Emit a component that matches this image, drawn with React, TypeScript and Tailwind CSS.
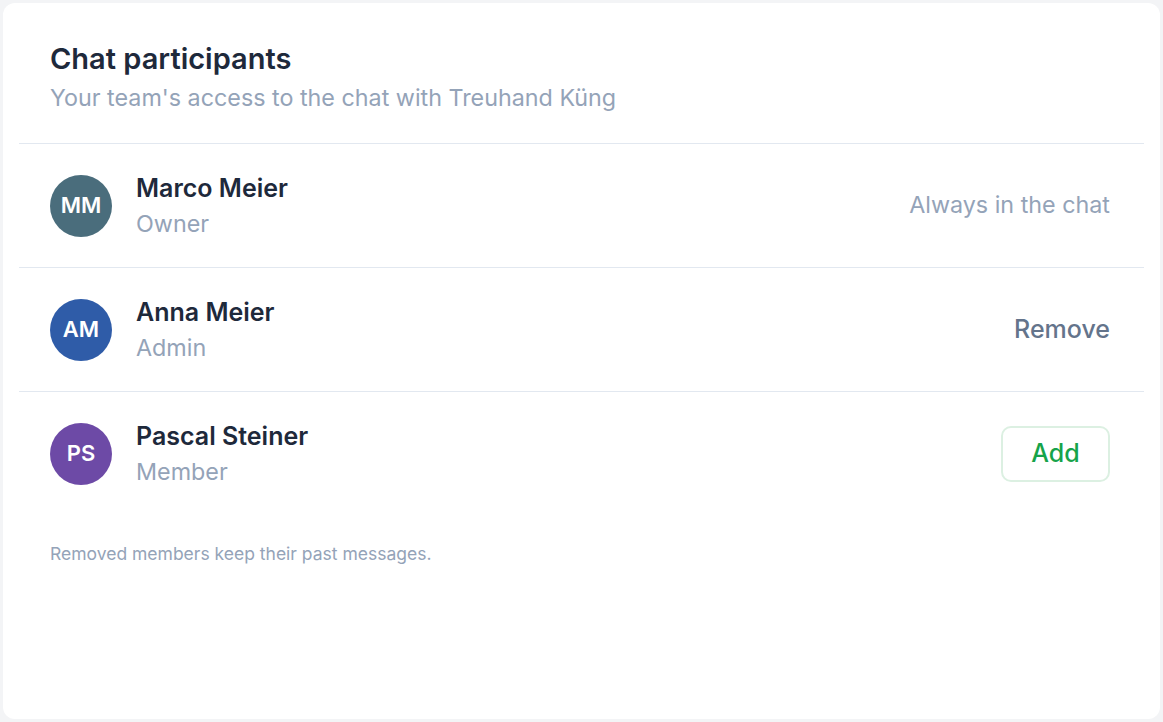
import React from "react";

const people = [
  { initials: "MM", name: "Marco Meier", role: "Owner", color: "bg-[#4a6d7c]", action: "always" },
  { initials: "AM", name: "Anna Meier", role: "Admin", color: "bg-[#2f5ca8]", action: "remove" },
  { initials: "PS", name: "Pascal Steiner", role: "Member", color: "bg-[#6d4aa6]", action: "add" },
];

export default function App() {
  return (
    <div className="w-[1163px] h-[722px] bg-[#f3f4f6] p-[3px] font-['Inter',sans-serif]">
      <div className="h-full w-full rounded-[12px] bg-white px-4 pt-[38px]">
        <div className="px-[31px] pb-[30px]">
          <h1 className="text-[29px] leading-[36px] font-semibold text-[#1e293b]">Chat participants</h1>
          <p className="mt-[6px] text-[23.3px] leading-[30px] text-[#94a3b8]">Your team's access to the chat with Treuhand Küng</p>
        </div>
        <div>
          {people.map((p) => (
            <div
              key={p.initials}
              className="flex items-center h-[124px] pl-[31px] pr-[34px] border-t border-[#e2e8f0]"
            >
              <div className={`w-[62px] h-[62px] rounded-full ${p.color} flex items-center justify-center text-white text-[22px] font-semibold`}>
                {p.initials}
              </div>
              <div className="ml-[24px] flex-1">
                <div className="text-[25px] leading-[32px] font-semibold text-[#1e293b]">{p.name}</div>
                <div className="mt-[5px] text-[23.3px] leading-[30px] text-[#94a3b8]">{p.role}</div>
              </div>
              {p.action === "always" && (
                <div className="text-[23.3px] text-[#94a3b8]">Always in the chat</div>
              )}
              {p.action === "remove" && (
                <div className="text-[25px] font-medium text-[#64748b]">Remove</div>
              )}
              {p.action === "add" && (
                <button className="w-[109px] h-[56px] rounded-[10px] border-2 border-[#dcf0e2] text-[25px] font-medium text-[#16a34a]">
                  Add
                </button>
              )}
            </div>
          ))}
        </div>
        <p className="px-[31px] mt-[26px] text-[17.5px] text-[#94a3b8]">Removed members keep their past messages.</p>
      </div>
    </div>
  );
}
